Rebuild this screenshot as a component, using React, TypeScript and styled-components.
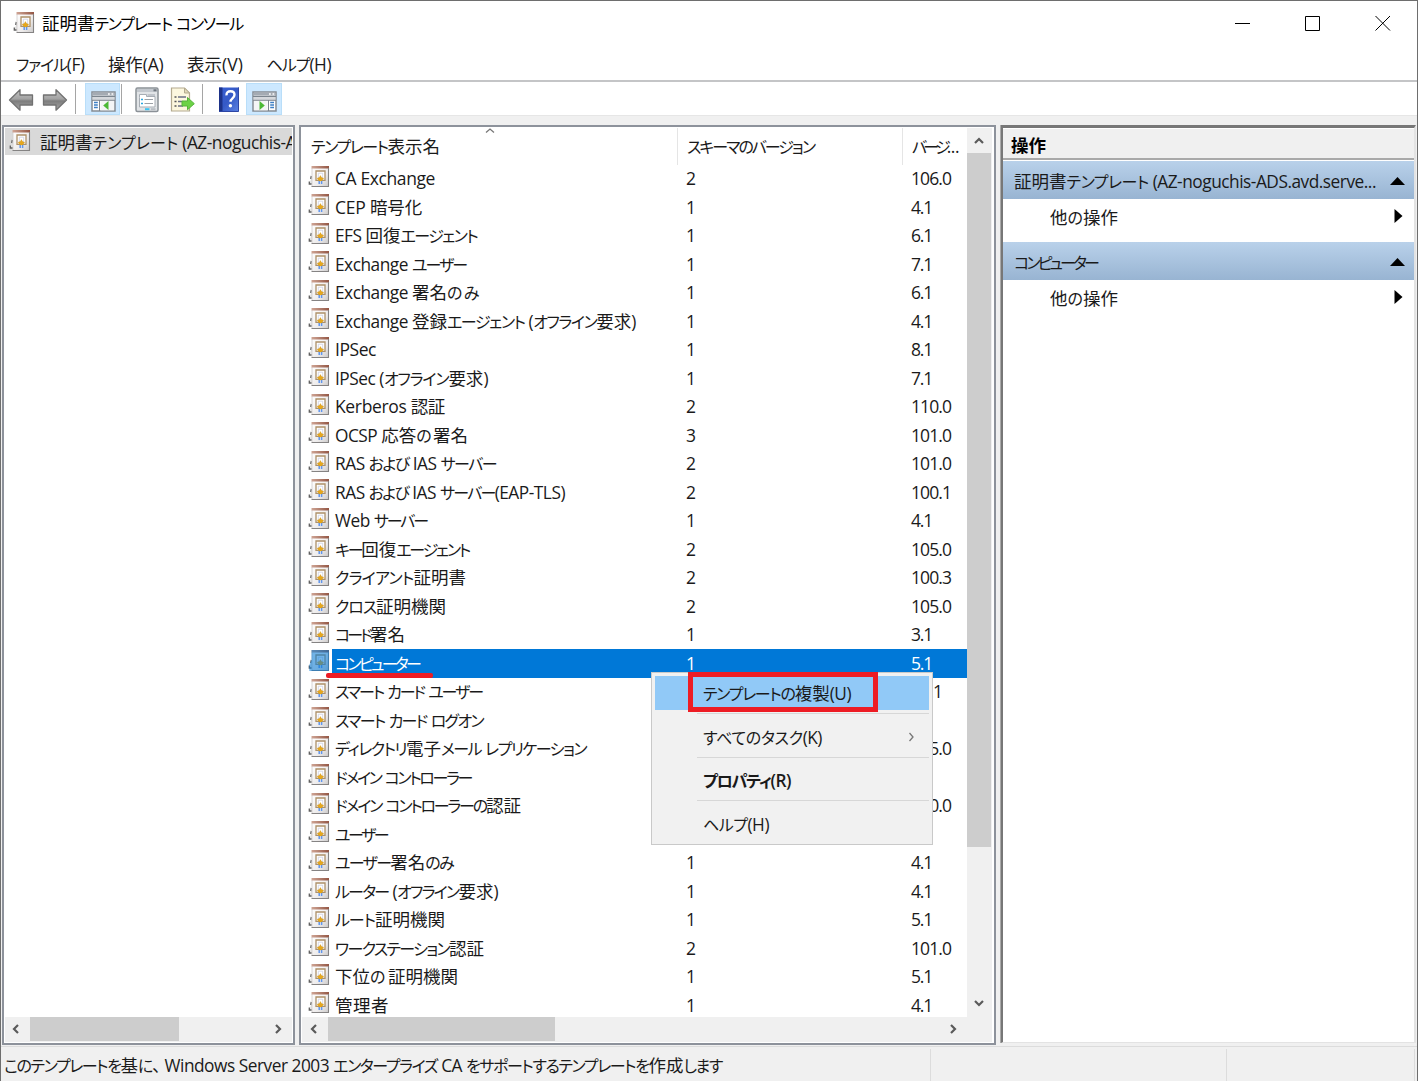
import React, { useLayoutEffect, useRef, useState } from 'react';
import styled, { createGlobalStyle, css } from 'styled-components';

const Global = createGlobalStyle`
  * { box-sizing: border-box; }
  body { margin: 0; overflow: hidden; background: #f0f0f0; }
`;

/* ---------- text ---------- */

const Line = styled.span<{ $bold?: boolean }>`
  display: inline-block;
  white-space: pre;
  font-family: 'Open Sans', 'Noto Sans CJK JP', sans-serif;
  font-size: 17.5px;
  line-height: 24px;
  font-weight: ${(p) => (p.$bold ? 600 : 400)};
`;
const Kana = styled.span`
  font-family: 'Noto Sans CJK JP', sans-serif;
  font-size: 16px;
  font-feature-settings: 'palt' 1;
`;
const Kanji = styled.span`
  font-family: 'Noto Sans CJK JP', sans-serif;
`;
const Comma = styled.span`
  letter-spacing: -5px;
`;
const Latin = styled.span`
  font-size: 17.3px;
  letter-spacing: -0.48px;
`;

const kanaPattern = /([\u3040-\u30ff]+)/;
const otherPattern = /([\u3400-\u9fff]+|、)/;

function Run({ text }: { text: string }) {
  if (text === '、') return <Comma>{text}</Comma>;
  return otherPattern.test(text) ? <Kanji>{text}</Kanji> : <Latin>{text}</Latin>;
}

/* Sets the letter spacing of the kana (or of the whole line when it has none) so the line takes a fixed width. */
function Label({ text, width, bold }: { text: string; width: number; bold?: boolean }) {
  const ref = useRef<HTMLSpanElement>(null);
  const [spacing, setSpacing] = useState<number | null>(null);
  const kanaCount = (text.match(/[\u3040-\u30ff]/g) || []).length;
  useLayoutEffect(() => {
    if (!ref.current) return;
    const natural = ref.current.getBoundingClientRect().width;
    setSpacing((width - natural) / (kanaCount || text.length));
  }, []);
  const gap = spacing === null ? undefined : { letterSpacing: spacing };
  if (!kanaCount) {
    return <Line ref={ref} $bold={bold} style={gap}>{text}</Line>;
  }
  return (
    <Line ref={ref} $bold={bold}>
      {text.split(kanaPattern).filter(Boolean).map((run, i) =>
        kanaPattern.test(run) ? (
          <Kana key={i} style={gap}>{run}</Kana>
        ) : (
          run.split(otherPattern).filter(Boolean).map((part, j) => <Run key={j} text={part} />)
        )
      )}
    </Line>
  );
}

/* ---------- icons ---------- */

const Svg = styled.svg`
  display: block;
  flex: none;
`;

function CertIcon({ selected }: { selected?: boolean }) {
  return (
    <Svg width="22" height="23" viewBox="0 0 22 23">
      <defs>
        <linearGradient id="certBody" x1="0" x2="1" y1="0" y2="1">
          <stop offset="0" stopColor="#ffffff" />
          <stop offset="0.600" stopColor="#eeecec" />
          <stop offset="1" stopColor="#c9c7c7" />
        </linearGradient>
        <linearGradient id="certTop" x1="0" x2="1">
          <stop offset="0" stopColor="#cfa595" />
          <stop offset="1" stopColor="#935644" />
        </linearGradient>
      </defs>
      <path d="M4 11L1.500 18.500h3z" fill="#e2e2e2" />
      <path d="M3.300 11L2.700 14M1.300 16.500v2.500h2.500" fill="none" stroke="#5f5f5f" strokeWidth="1.300" />
      <path d="M4 1.500h17v20.500H4z" fill="url(#certBody)" />
      <path d="M4 3v18" stroke="#cfcccc" strokeWidth="0.800" />
      <path d="M3.500 1h17.500v2.500H3.500z" fill="url(#certTop)" />
      <path d="M20.500 3v19M3.500 21.500H21" stroke="#858383" strokeWidth="1.100" />
      <path d="M8 6h9v9.300H8z" fill="#fff" stroke="#ad9068" strokeWidth="1.300" />
      <path d="M10.300 8.200h4.400v4.500h-4.400z" fill="#fff" stroke="#cbd0e2" strokeWidth="0.800" />
      <path d="M11.200 15v4M13.600 15v4" stroke="#5f95ee" strokeWidth="1.500" />
      <path d="M12.400 10.500l1.100 2 2.200.7-1.100 1.500-.7 1.200h-3l-.7-1.200-1.100-1.500 2.200-.7z" fill="#e5a71d" stroke="#c98d18" strokeWidth="0.300" />
      {selected && <path d="M3.500 1h17.500v21H1.300V16l2.200-5z" fill="#0078d7" opacity="0.550" />}
    </Svg>
  );
}

function NavArrow({ right }: { right?: boolean }) {
  return (
    <Svg width="26" height="24" viewBox="0 0 26 24">
      <defs>
        <linearGradient id="navShade" x1="0" x2="0" y1="0" y2="1">
          <stop offset="0" stopColor="#c4c4c4" />
          <stop offset="0.450" stopColor="#a2a2a2" />
          <stop offset="0.550" stopColor="#7d7d7d" />
          <stop offset="1" stopColor="#a6a6a6" />
        </linearGradient>
      </defs>
      <path
        transform={right ? 'matrix(-1 0 0 1 26 0)' : undefined}
        d="M1.500 12L12 1.800V7H24.500V17H12V22.200Z"
        fill="url(#navShade)"
        stroke="#717171"
        strokeWidth="1.300"
        strokeLinejoin="round"
      />
    </Svg>
  );
}

function PaneIcon({ right }: { right?: boolean }) {
  const tx = right ? 'matrix(-1 0 0 1 25 0)' : undefined;
  return (
    <Svg width="25" height="21" viewBox="0 0 25 21">
      <path d="M1 1h23v19H1z" fill="#fff" stroke="#858c94" strokeWidth="1.500" />
      <path d="M1.500 1.500h22v3.200h-22z" fill="#a4abb3" />
      <path d="M1 5.500h23" stroke="#7c858e" />
      <path d="M17 3h1.800M20.500 3h1.800" stroke="#fff" strokeWidth="1.500" />
      <path d="M1.500 6h22v3h-22z" fill="#d5d8dc" />
      <g transform={tx}>
        <path d="M8.500 9v11M1 9.300h23" stroke="#7d858e" />
        <path d="M3 11.500h3.800M3 14h3.800M3 16.500h3.800" stroke="#3d7fc4" strokeWidth="1.300" />
        <path d="M9.500 10h13.500v9.300H9.500z" fill="#f4f5f6" />
        <path d="M17.500 10v9l-5.300-4.500z" fill="#4cb936" />
      </g>
    </Svg>
  );
}

function PropertiesIcon() {
  return (
    <Svg width="24" height="26" viewBox="0 0 24 26">
      <rect x="1" y="1" width="22" height="23.500" rx="1.500" fill="#e1e4e7" stroke="#8b9197" strokeWidth="1.500" />
      <path d="M2 2h20v3H2z" fill="#c3c8ce" />
      <path d="M18.500 2.300h3v2h-3z" fill="#6d757d" />
      <path d="M4.500 10.500V7.500h7v2h8.500v10.500H4.500z" fill="#fff" stroke="#a7adb4" />
      <path d="M12.500 7h7.500v2h-7.500z" fill="#c0c5cb" />
      <path d="M6 12.500h2M6 16.500h2" stroke="#28a7e0" strokeWidth="1.700" />
      <path d="M9.500 12.500H18M9.500 16.500H18" stroke="#9ba0a6" strokeWidth="1.200" />
      <path d="M10 21.200h4.500v2h-4.500z" fill="#3cc4f0" />
      <path d="M15.800 21.200h4.700v2h-4.700z" fill="#b8bdc3" />
    </Svg>
  );
}

function ExportIcon() {
  return (
    <Svg width="26" height="26" viewBox="0 0 26 26">
      <path d="M1.500 1h13l5 5v18h-18z" fill="#fcf7de" stroke="#b3aa8f" strokeWidth="1.200" />
      <path d="M14.500 1v5h5z" fill="#e0d8b8" stroke="#b3aa8f" />
      <path d="M4.500 10h2M4.500 14.500h2M4.500 19h2" stroke="#555" strokeWidth="1.500" />
      <path d="M8 10h8M8 14.500h4M8 19h5" stroke="#6a6f85" strokeWidth="1.300" />
      <path d="M12 14h5.500V10.500l6.800 6.200-6.800 6v-3.700H12z" fill="#6cd246" stroke="#56b43a" />
    </Svg>
  );
}

function HelpIcon() {
  return (
    <Svg width="20" height="25" viewBox="0 0 20 25">
      <defs>
        <linearGradient id="helpBlue" x1="0" x2="1" y1="0" y2="1">
          <stop offset="0" stopColor="#3a61d5" />
          <stop offset="0.500" stopColor="#3559c6" />
          <stop offset="1" stopColor="#5c82e2" />
        </linearGradient>
      </defs>
      <path d="M0 0.500h20v24H0z" fill="url(#helpBlue)" />
      <path d="M0 .5h3.500v24H0z" fill="#1d3288" />
      <path d="M19.500.5v24H0" fill="none" stroke="#2d46a5" />
      <path d="M7.500 8.300C7.300 5.300 9.200 4.300 11.500 4.300c2.500 0 4 1.400 4 3.500 0 3.700-4 3.400-4 7" fill="none" stroke="#fff" strokeWidth="2.400" />
      <circle cx="11.400" cy="18.800" r="1.700" fill="#fff" />
    </Svg>
  );
}

function Chevron({ dir, thin }: { dir: 'left' | 'right' | 'up' | 'down'; thin?: boolean }) {
  const turn = { left: 0, up: 90, right: 180, down: 270 }[dir];
  return (
    <Svg width="12" height="12" viewBox="0 0 12 12">
      <path
        transform={`rotate(${turn} 6 6)`}
        d={thin ? 'M7.500 2L4 6L7.500 10' : 'M8 2L4 6L8 10'}
        fill="none"
        stroke={thin ? '#777' : '#5a5a5a'}
        strokeWidth={thin ? 1.3 : 2.2}
      />
    </Svg>
  );
}

/* ---------- frame ---------- */

const Window = styled.div`
  width: 1418px;
  height: 1081px;
  display: flex;
  flex-direction: column;
  border: 1px solid #6e6e6e;
  border-bottom: 0;
  background: #f0f0f0;
  color: #1a1a1a;
  position: relative;
  overflow: hidden;
`;
const DesktopEdge = styled.div`
  position: absolute;
  left: 126px;
  top: -1px;
  width: 146px;
  height: 1px;
  background: #79402c;
`;
const TitleBar = styled.header`
  height: 43px;
  flex: none;
  display: flex;
  align-items: center;
  padding: 0 26px 0 12px;
  background: #fff;
  color: #000;
`;
const TitleText = styled.div`
  flex: 1;
  margin-left: 7px;
  padding-top: 2px;
`;
const Controls = styled.div`
  display: flex;
  gap: 54px;
  padding-top: 1px;
`;
const MenuBar = styled.nav`
  height: 38px;
  flex: none;
  display: flex;
  padding: 8px 0 0 15px;
  gap: 23.500px;
  background: #fff;
  border-bottom: 2px solid #c4c5c7;
`;
const ToolBar = styled.div`
  height: 34px;
  flex: none;
  display: flex;
  align-items: center;
  padding-left: 7px;
  background: #fff;
  border-bottom: 1px solid #e6e6e6;
`;
const ToolButton = styled.div<{ $w: number; $on?: boolean }>`
  width: ${(p) => p.$w}px;
  height: 32px;
  display: flex;
  align-items: center;
  justify-content: center;
  padding-top: 2px;
  ${(p) => p.$on && css`
    background: #cce8ff;
    border: 1px solid #b9def9;
    padding: 5px 0 0 1px;
  `}
`;
const ToolDivider = styled.div<{ $l: number; $r: number }>`
  width: 1px;
  height: 30px;
  margin: 0 ${(p) => p.$r}px 0 ${(p) => p.$l}px;
  background: #a5a5a5;
`;
const Workspace = styled.main`
  flex: 1;
  min-height: 0;
  display: flex;
  padding: 9px 0 0 1px;
`;
const Panel = styled.section<{ $w: number; $gap: number; $right: number }>`
  width: ${(p) => p.$w}px;
  height: 920px;
  flex: none;
  margin-right: ${(p) => p.$gap}px;
  display: flex;
  flex-direction: column;
  border: 2px solid #8d929b;
  padding: 1px ${(p) => p.$right}px 1px 1px;
  background: #fff;
`;
const TreeRow = styled.div`
  height: 27px;
  flex: none;
  display: flex;
  align-items: center;
  padding-left: 4px;
  gap: 9px;
  background: #d9d9d9;
  overflow: hidden;
`;
const TreeIcon = styled.div`
  margin-top: -3px;
`;
const TreeText = styled.div`
  padding-top: 1px;
`;
const Fill = styled.div`
  flex: 1;
`;

/* ---------- scroll bars ---------- */

const HBar = styled.div<{ $end: number; $start: number }>`
  height: 25px;
  flex: none;
  display: flex;
  align-items: center;
  padding: 0 ${(p) => p.$end}px 2px ${(p) => p.$start}px;
  background: #f0f0f0;
`;
const HThumb = styled.div<{ $w: number }>`
  width: ${(p) => p.$w}px;
  height: 24px;
  margin: 0 auto 0 7.500px;
  background: #cdcdcd;
`;
const VBar = styled.div`
  width: 25px;
  flex: none;
  display: flex;
  flex-direction: column;
  align-items: center;
  padding: 7px 1px 8px 0;
  background: #f0f0f0;
`;
const VThumb = styled.div`
  width: 24px;
  height: 694px;
  margin: 6px 0 auto;
  background: #cdcdcd;
`;

/* ---------- template list ---------- */

const ListBody = styled.div`
  flex: 1;
  min-height: 0;
  display: flex;
`;
const Table = styled.div`
  flex: 1;
  overflow: hidden;
`;
const columns = css`
  display: grid;
  grid-template-columns: 376px 225px 1fr;
`;
const HeaderRow = styled.div`
  ${columns}
  height: 36.5px;
`;
const HeaderCell = styled.div`
  position: relative;
  padding: 6px 0 0 9px;
  border-right: 1px solid #e5e5e5;
  overflow: hidden;
  &:last-child { border-right: 0; }
`;
const SortMark = styled.div`
  position: absolute;
  left: 182px;
  top: -3px;
`;
const Row = styled.div<{ $selected?: boolean }>`
  ${columns}
  height: 28.5px;
  ${(p) => p.$selected && css`
    background: linear-gradient(to right, #fff 30px, #0078d7 30px);
    color: #fff;
  `}
`;
const NameCell = styled.div`
  display: flex;
  padding-left: 6px;
  gap: 5px;
  & > span { margin-top: 1.500px; }
`;
const Cell = styled.div`
  padding: 1.500px 0 0 8px;
`;

/* ---------- actions pane ---------- */

const Actions = styled.aside`
  width: 415px;
  height: 918px;
  flex: none;
  display: flex;
  flex-direction: column;
  border-top: 3px solid #777;
  border-left: 2px solid #777;
  border-right: 2px solid #e3e3e3;
  border-bottom: 1px solid #e3e3e3;
  box-shadow: -1px 0 0 #aaa;
  background: #fff;
`;
const ActionsTitle = styled.div`
  height: 31px;
  flex: none;
  margin: 1px 0;
  padding: 4px 0 0 8px;
  background: #f0f0f0;
  border-bottom: 2px solid #a9a9a9;
  color: #000;
`;
const GroupTitle = styled.div`
  height: 38px;
  flex: none;
  display: flex;
  align-items: center;
  justify-content: space-between;
  padding: 2px 9px 0 11px;
  background: linear-gradient(#b9d1ea, #98b4d2);
`;
const ActionItem = styled.div`
  height: 43px;
  flex: none;
  display: flex;
  justify-content: space-between;
  padding: 6px 11px 0 47px;
`;
const Glyph = styled.div<{ $down?: number }>`
  padding-top: ${(p) => p.$down ?? 0}px;
`;

/* ---------- status bar ---------- */

const StatusBar = styled.footer`
  height: 35px;
  flex: none;
  display: grid;
  grid-template-columns: 930px 296px 188px;
  border-top: 1px solid #dcdcdc;
`;
const StatusCell = styled.div`
  margin-top: 2px;
  padding: 4px 0 0 3px;
  border-right: 1px solid #dcdcdc;
`;

/* ---------- context menu and marks ---------- */

const ContextMenu = styled.div`
  position: absolute;
  left: 650px;
  top: 671px;
  width: 282px;
  height: 173px;
  padding: 3px;
  display: flex;
  flex-direction: column;
  background: #f1f1f1;
  border: 1px solid #c9c9c9;
  color: #1a1a1a;
`;
const MenuItem = styled.div<{ $hot?: boolean }>`
  height: 34px;
  flex: none;
  display: flex;
  align-items: center;
  justify-content: space-between;
  padding: 1px 12px 0 48px;
  background: ${(p) => (p.$hot ? '#91c9f7' : 'transparent')};
`;
const MenuLine = styled.div`
  height: 1px;
  flex: none;
  margin: 3px 0 5.700px 42px;
  background: #d7d7d7;
`;
const RedBox = styled.div`
  position: absolute;
  left: 687px;
  top: 671px;
  width: 190px;
  height: 40px;
  border: 5px solid #ed1c24;
`;
const RedUnderline = styled.div`
  position: absolute;
  left: 325px;
  top: 672px;
  width: 107px;
  height: 5px;
  border-radius: 2px;
  background: #ed1c24;
`;

/* ---------- data ---------- */

type Template = [name: string, width: number, schema: string, version: string];
const templates: Template[] = [
  ['CA Exchange', 100, '2', '106.0'],
  ['CEP 暗号化', 87, '1', '4.1'],
  ['EFS 回復エージェント', 142, '1', '6.1'],
  ['Exchange ユーザー', 131, '1', '7.1'],
  ['Exchange 署名のみ', 146, '1', '6.1'],
  ['Exchange 登録エージェント (オフライン要求)', 301, '1', '4.1'],
  ['IPSec', 41, '1', '8.1'],
  ['IPSec (オフライン要求)', 153, '1', '7.1'],
  ['Kerberos 認証', 110, '2', '110.0'],
  ['OCSP 応答の署名', 133, '3', '101.0'],
  ['RAS および IAS サーバー', 161, '2', '101.0'],
  ['RAS および IAS サーバー(EAP-TLS)', 230, '2', '100.1'],
  ['Web サーバー', 92, '1', '4.1'],
  ['キー回復エージェント', 134, '2', '105.0'],
  ['クライアント証明書', 131, '2', '100.3'],
  ['クロス証明機関', 111, '2', '105.0'],
  ['コード署名', 70, '1', '3.1'],
  ['コンピューター', 84, '1', '5.1'],
  ['スマート カード ユーザー', 147, '1', '11.1'],
  ['スマート カード ログオン', 148, '1', '6.1'],
  ['ディレクトリ電子メール レプリケーション', 251, '2', '115.0'],
  ['ドメイン コントローラー', 136, '1', '4.1'],
  ['ドメイン コントローラーの認証', 186, '2', '110.0'],
  ['ユーザー', 52, '1', '3.1'],
  ['ユーザー署名のみ', 118, '1', '4.1'],
  ['ルーター (オフライン要求)', 163, '1', '4.1'],
  ['ルート証明機関', 110, '1', '5.1'],
  ['ワークステーション認証', 149, '2', '101.0'],
  ['下位の証明機関', 123, '1', '5.1'],
  ['管理者', 54, '1', '4.1'],
];
const versionWidth = (v: string) => (v.length === 5 ? 40 : v.length === 4 ? 31 : 21);

const menus: [string, number][] = [
  ['ファイル(F)', 68.5],
  ['操作(A)', 55.5],
  ['表示(V)', 56],
  ['ヘルプ(H)', 64.5],
];

function ActionGroup({ title, width }: { title: string; width: number }) {
  return (
    <>
      <GroupTitle>
        <Label text={title} width={width} />
        <Svg width="15" height="9" viewBox="0 0 15 9"><path d="M0 8L7.500 0L15 8z" fill="#000" /></Svg>
      </GroupTitle>
      <ActionItem>
        <Label text="他の操作" width={68} />
        <Glyph $down={4}>
          <Svg width="9" height="14" viewBox="0 0 9 14"><path d="M.5 0L8.500 7L.5 14z" fill="#000" /></Svg>
        </Glyph>
      </ActionItem>
    </>
  );
}

export default function App() {
  return (
    <>
      <Global />
      <Window>
        <DesktopEdge />
        <TitleBar>
          <CertIcon />
          <TitleText><Label text="証明書テンプレート コンソール" width={201} /></TitleText>
          <Controls>
            <Svg width="16" height="16" viewBox="0 0 16 16"><path d="M0 8.500h15" stroke="#000" /></Svg>
            <Svg width="16" height="16" viewBox="0 0 16 16"><path d="M.5 1.500h14v14H.5z" transform="translate(-1 0)" fill="none" stroke="#000" style={{ transform: 'none' }} /></Svg>
            <Svg width="16" height="16" viewBox="0 0 16 16"><path d="M.5 1L15 15.500M15 1L.5 15.500" stroke="#000" /></Svg>
          </Controls>
        </TitleBar>
        <MenuBar>
          {menus.map(([text, width]) => <Label key={text} text={text} width={width} />)}
        </MenuBar>
        <ToolBar>
          <ToolButton $w={26}><NavArrow /></ToolButton>
          <ToolButton $w={41}><NavArrow right /></ToolButton>
          <ToolDivider $l={0} $r={9} />
          <ToolButton $w={35} $on><PaneIcon /></ToolButton>
          <ToolDivider $l={1} $r={8} />
          <ToolButton $w={34}><PropertiesIcon /></ToolButton>
          <ToolButton $w={37}><ExportIcon /></ToolButton>
          <ToolDivider $l={1} $r={8} />
          <ToolButton $w={35}><HelpIcon /></ToolButton>
          <ToolButton $w={36} $on><PaneIcon right /></ToolButton>
        </ToolBar>
        <Workspace>
          <Panel $w={293} $gap={4} $right={1}>
            <TreeRow>
              <TreeIcon><CertIcon /></TreeIcon>
              <TreeText><Label text="証明書テンプレート (AZ-noguchis-A" width={256} /></TreeText>
            </TreeRow>
            <Fill />
            <HBar $start={5} $end={8}>
              <Chevron dir="left" />
              <HThumb $w={149} />
              <Chevron dir="right" />
            </HBar>
          </Panel>
          <Panel $w={697} $gap={5} $right={2}>
            <ListBody>
              <Table>
                <HeaderRow>
                  <HeaderCell>
                    <SortMark><Chevron dir="up" thin /></SortMark>
                    <Label text="テンプレート表示名" width={129} />
                  </HeaderCell>
                  <HeaderCell><Label text="スキーマのバージョン" width={127} /></HeaderCell>
                  <HeaderCell><Label text="バージ..." width={47} /></HeaderCell>
                </HeaderRow>
                {templates.map(([name, width, schema, version]) => {
                  const selected = name === 'コンピューター';
                  return (
                    <Row key={name} $selected={selected}>
                      <NameCell>
                        <CertIcon selected={selected} />
                        <Label text={name} width={width} />
                      </NameCell>
                      <Cell><Label text={schema} width={10} /></Cell>
                      <Cell><Label text={version} width={versionWidth(version)} /></Cell>
                    </Row>
                  );
                })}
              </Table>
              <VBar>
                <Chevron dir="up" />
                <VThumb />
                <Chevron dir="down" />
              </VBar>
            </ListBody>
            <HBar $start={6} $end={33}>
              <Chevron dir="left" />
              <HThumb $w={227} />
              <Chevron dir="right" />
            </HBar>
          </Panel>
          <Actions>
            <ActionsTitle><Label text="操作" width={35} bold /></ActionsTitle>
            <ActionGroup title="証明書テンプレート (AZ-noguchis-ADS.avd.serve..." width={362} />
            <ActionGroup title="コンピューター" width={83} />
          </Actions>
        </Workspace>
        <StatusBar>
          <StatusCell>
            <Label text="このテンプレートを基に、Windows Server 2003 エンタープライズ CA をサポートするテンプレートを作成します" width={718} />
          </StatusCell>
          <StatusCell />
          <StatusCell />
        </StatusBar>
        <RedUnderline />
        <ContextMenu>
          <MenuItem $hot><Label text="テンプレートの複製(U)" width={148} /></MenuItem>
          <MenuLine />
          <MenuItem>
            <Label text="すべてのタスク(K)" width={119} />
            <Chevron dir="right" thin />
          </MenuItem>
          <MenuLine />
          <MenuItem><Label text="プロパティ(R)" width={88} bold /></MenuItem>
          <MenuLine />
          <MenuItem><Label text="ヘルプ(H)" width={66} /></MenuItem>
        </ContextMenu>
        <RedBox />
      </Window>
    </>
  );
}
